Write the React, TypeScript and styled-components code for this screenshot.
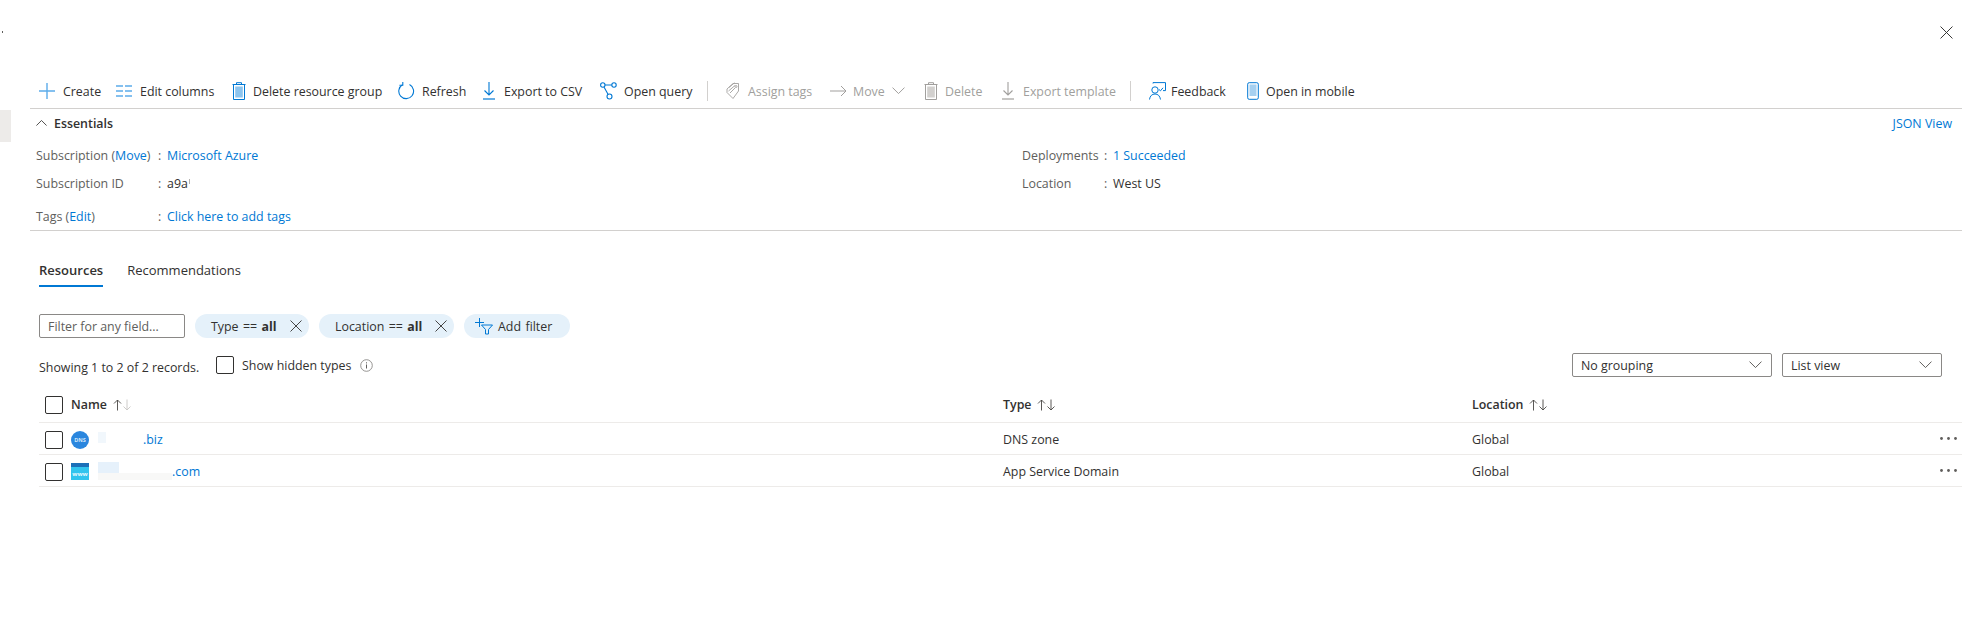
import React from 'react';
import styled, { createGlobalStyle } from 'styled-components';

const BLUE = '#0078d4';
const SOFT = '#5cacea';
const GREY = '#a19f9d';

const GlobalStyle = createGlobalStyle`
  html, body {
    margin: 0;
    padding: 0;
    background: #ffffff;
  }
  body {
    font-family: 'Open Sans', 'Liberation Sans', sans-serif;
    font-size: 12.4px;
    color: #323130;
  }
`;

const PlusIcon = () => (
  <svg width="16" height="16" viewBox="0 0 16 16">
    <path d="M8 0v16M0 8h16" stroke={SOFT} strokeWidth="1.4" fill="none" />
  </svg>
);
const ColumnsIcon = () => (
  <svg width="16" height="12" viewBox="0 0 16 12">
    <path d="M0 1h7M9 1h7M0 6h7M9 6h7M0 11h7M9 11h7" stroke={SOFT} strokeWidth="1.5" fill="none" />
  </svg>
);
const TrashIcon = ({ color = BLUE, fill = '#8cc4ee' }: { color?: string; fill?: string }) => (
  <svg width="14" height="18" viewBox="0 0 14 18">
    <path d="M4.5 2V.7h5V2M.5 2.5h13M1.5 2.500v15h11v-15" stroke={color} strokeWidth="1" fill="none" />
    <rect x="3.2" y="4.500" width="7.600" height="11" fill={fill} />
  </svg>
);
const RefreshIcon = () => (
  <svg width="17" height="18" viewBox="0 0 17 18">
    <path d="M11.5 2.600a7.400 7.400 0 1 1-7 .2" stroke={BLUE} strokeWidth="1.100" fill="none" />
    <path d="M4.800 0v3.200H1.400" stroke={BLUE} strokeWidth="1.100" fill="none" />
  </svg>
);
const DownloadIcon = ({ color = BLUE }: { color?: string }) => (
  <svg width="12" height="18" viewBox="0 0 12 18">
    <path d="M6 0v13M1.500 8.500 6 13l4.500-4.500" stroke={color} strokeWidth="1.100" fill="none" />
    <path d="M0 17h12" stroke={color} strokeWidth="1.200" fill="none" />
  </svg>
);
const QueryIcon = () => (
  <svg width="17" height="18" viewBox="0 0 17 18">
    <g stroke={BLUE} strokeWidth="1.100" fill="none">
      <circle cx="2.800" cy="3" r="2.200" />
      <circle cx="14" cy="3" r="2.200" />
      <circle cx="9.500" cy="14.500" r="2.500" />
      <path d="M5 3h6.800M4 5l4 7.300" />
    </g>
  </svg>
);
const TagsIcon = () => (
  <svg width="14" height="18" viewBox="0 0 14 18">
    <g stroke={GREY} strokeWidth="0.900" fill="none">
      <path d="M1 7 7 1.500h5.500V9L7 16.500 1 10.500z" />
      <path d="M3 5.500 8.500.8M2.500 9 9 3.500M4 11l5-5" />
      <circle cx="10" cy="4.500" r="1" />
    </g>
  </svg>
);
const ArrowIcon = () => (
  <svg width="17" height="12" viewBox="0 0 17 12">
    <path d="M0 6h16M11 1l5 5-5 5" stroke={GREY} strokeWidth="1" fill="none" />
  </svg>
);
const FeedbackIcon = () => (
  <svg width="17" height="18" viewBox="0 0 17 18">
    <g stroke={BLUE} strokeWidth="1" fill="none">
      <circle cx="6" cy="8" r="3.200" />
      <path d="M.5 17.500c.4-3.500 2.500-5.500 5.500-5.500s5 2 5.500 5.500" />
      <path d="M4 1.500V.6h12.500v8H14" />
      <path d="M10 7.500l1.500 1.300 2.500-3" />
    </g>
  </svg>
);
const MobileIcon = () => (
  <svg width="12" height="18" viewBox="0 0 12 18">
    <rect x="0.700" y="0.700" width="10.600" height="16.600" rx="1.500" stroke={BLUE} strokeWidth="1" fill="#ffffff" />
    <rect x="2.500" y="2.500" width="7" height="11.500" fill="#a6d0f0" />
  </svg>
);
const Chevron = ({ size = 13, color = '#605e5c' }: { size?: number; color?: string }) => (
  <svg width={size} height={size * 0.55} viewBox="0 0 13 7">
    <path d="M.5.500l6 6 6-6" stroke={color} strokeWidth="1" fill="none" />
  </svg>
);
const Cross = ({ size = 12, color = '#323130' }: { size?: number; color?: string }) => (
  <svg width={size} height={size} viewBox="0 0 12 12">
    <path d="M.5.500l11 11M11.500.500l-11 11" stroke={color} strokeWidth="0.900" fill="none" />
  </svg>
);
const SortArrows = ({ faded }: { faded?: boolean }) => (
  <svg width="19" height="12" viewBox="0 0 19 12">
    <path d="M4.500 11.500V1M1 4.500l3.500-3.500 3.500 3.500" stroke="#484644" strokeWidth="0.900" fill="none" />
    <path d="M14 .5V11M10.500 7.500 14 11l3.500-3.500" stroke={faded ? '#c8c6c4' : '#484644'} strokeWidth="0.900" fill="none" />
  </svg>
);
const AddFilterIcon = () => (
  <svg width="18" height="17" viewBox="0 0 18 17">
    <path d="M4.500 0v9M0 4.500h9" stroke={BLUE} strokeWidth="1" fill="none" />
    <path d="M6.500 7h11l-4 4.500V16h-3v-4.500z" stroke={BLUE} strokeWidth="1" fill="none" />
  </svg>
);
const InfoIcon = () => (
  <svg width="13" height="13" viewBox="0 0 13 13">
    <circle cx="6.500" cy="6.500" r="5.800" stroke="#8a8886" strokeWidth="0.900" fill="none" />
    <path d="M6.500 5.500v4M6.500 3.300v1.100" stroke="#605e5c" strokeWidth="1" fill="none" />
  </svg>
);
const DnsIcon = () => (
  <svg width="18" height="18" viewBox="0 0 18 18">
    <circle cx="9" cy="9" r="9" fill="#2a86de" />
    <text x="9" y="11" textAnchor="middle" fontSize="5.500" fontWeight="700" fill="#cfe6fa" fontFamily="Open Sans">DNS</text>
  </svg>
);
const WwwIcon = () => (
  <svg width="18" height="17" viewBox="0 0 18 17">
    <rect width="18" height="17" fill="#32c4ee" />
    <rect width="18" height="4" fill="#1b6fb8" />
    <text x="9" y="12.500" textAnchor="middle" fontSize="6" fontWeight="700" fill="#e8f8fe" fontFamily="Open Sans">www</text>
  </svg>
);
const DotsIcon = () => (
  <svg width="17" height="3" viewBox="0 0 17 3">
    <circle cx="1.500" cy="1.500" r="1.400" fill="#605e5c" />
    <circle cx="8.500" cy="1.500" r="1.400" fill="#605e5c" />
    <circle cx="15.500" cy="1.500" r="1.400" fill="#605e5c" />
  </svg>
);

const toolbarItems = [
  { label: 'Create', icon: <PlusIcon />, width: 77, slot: 24 },
  { label: 'Edit columns', icon: <ColumnsIcon />, width: 116, slot: 24 },
  { label: 'Delete resource group', icon: <TrashIcon />, width: 166, slot: 21 },
  { label: 'Refresh', icon: <RefreshIcon />, width: 85, slot: 24 },
  { label: 'Export to CSV', icon: <DownloadIcon />, width: 117, slot: 21 },
  { label: 'Open query', icon: <QueryIcon />, width: 107, slot: 24 },
  { separator: true },
  { label: 'Assign tags', icon: <TagsIcon />, width: 104, slot: 22, disabled: true },
  { label: 'Move', icon: <ArrowIcon />, width: 94, slot: 23, disabled: true, menu: true },
  { label: 'Delete', icon: <TrashIcon color={GREY} fill="#d2d0ce" />, width: 78, slot: 21, disabled: true },
  { label: 'Export template', icon: <DownloadIcon color={GREY} />, width: 128, slot: 21, disabled: true },
  { separator: true },
  { label: 'Feedback', icon: <FeedbackIcon />, width: 98, slot: 22 },
  { label: 'Open in mobile', icon: <MobileIcon />, width: 120, slot: 19 },
];

export default function App() {
  return (
    <Page>
      <GlobalStyle />
      <StrayDot />
      <SideStub />
      <TopBar>
        <Cross size={13} />
      </TopBar>

      <Toolbar>
        {toolbarItems.map((item, i) =>
          item.separator ? (
            <ToolSeparator key={i} />
          ) : (
            <ToolButton key={i} $width={item.width} $disabled={item.disabled}>
              <IconSlot $width={item.slot}>{item.icon}</IconSlot>
              {item.label}
              {item.menu && (
                <MenuChevron>
                  <Chevron color={GREY} />
                </MenuChevron>
              )}
            </ToolButton>
          ),
        )}
      </Toolbar>

      <Essentials>
        <EssentialsHead>
          <EssentialsTitle>
            <ChevronUp>
              <Chevron size={11} color="#323130" />
            </ChevronUp>
            Essentials
          </EssentialsTitle>
          <Link>JSON View</Link>
        </EssentialsHead>
        <EssentialsGrid>
          <InfoRow>
            <InfoLabel>
              Subscription (<Link>Move</Link>)
            </InfoLabel>
            <Colon>:</Colon>
            <Link>Microsoft Azure</Link>
          </InfoRow>
          <InfoRow>
            <InfoLabel $short>Deployments</InfoLabel>
            <Colon>:</Colon>
            <Link>1 Succeeded</Link>
          </InfoRow>
          <InfoRow>
            <InfoLabel>Subscription ID</InfoLabel>
            <Colon>:</Colon>
            <span>a9a</span>
            <CutMark />
          </InfoRow>
          <InfoRow>
            <InfoLabel $short>Location</InfoLabel>
            <Colon>:</Colon>
            <span>West US</span>
          </InfoRow>
          <InfoRow $tall>
            <InfoLabel>
              Tags (<Link>Edit</Link>)
            </InfoLabel>
            <Colon>:</Colon>
            <Link>Click here to add tags</Link>
          </InfoRow>
        </EssentialsGrid>
      </Essentials>

      <Tabs>
        <Tab $active>Resources</Tab>
        <Tab>Recommendations</Tab>
      </Tabs>

      <FilterRow>
        <FilterInput placeholder="Filter for any field..." readOnly />
        <Pill $width={114}>
          <span>
            Type == <b>all</b>
          </span>
          <Cross />
        </Pill>
        <Pill $width={135}>
          <span>
            Location == <b>all</b>
          </span>
          <Cross />
        </Pill>
        <Pill $width={106} $add>
          <AddFilterIcon />
          <span>Add filter</span>
        </Pill>
      </FilterRow>

      <SummaryRow>
        <RecordCount>Showing 1 to 2 of 2 records.</RecordCount>
        <Checkbox />
        <HiddenLabel>Show hidden types</HiddenLabel>
        <InfoIcon />
        <Selects>
          <Select $width={200}>
            No grouping
            <Chevron />
          </Select>
          <Select $width={160}>
            List view
            <Chevron />
          </Select>
        </Selects>
      </SummaryRow>

      <Table>
        <HeaderRow>
          <Checkbox $inset />
          <HeaderCell>
            Name
            <SortArrows faded />
          </HeaderCell>
          <HeaderCell>
            Type
            <SortArrows />
          </HeaderCell>
          <HeaderCell>
            Location
            <SortArrows />
          </HeaderCell>
        </HeaderRow>
        <BodyRow>
          <Checkbox $inset />
          <NameCell>
            <DnsIcon />
            <Link>
              <Redacted $width={45}>
                <FaintPatch />
              </Redacted>
              .biz
            </Link>
          </NameCell>
          <span>DNS zone</span>
          <span>Global</span>
          <MoreButton>
            <DotsIcon />
          </MoreButton>
        </BodyRow>
        <BodyRow>
          <Checkbox $inset />
          <NameCell>
            <WwwIcon />
            <Link>
              <Redacted $width={74}>
                <BluePatch />
                <GreyPatch />
              </Redacted>
              .com
            </Link>
          </NameCell>
          <span>App Service Domain</span>
          <span>Global</span>
          <MoreButton>
            <DotsIcon />
          </MoreButton>
        </BodyRow>
      </Table>
    </Page>
  );
}

const Page = styled.div`
  position: relative;
  box-sizing: border-box;
  width: 1976px;
  height: 644px;
  padding: 0 14px 0 30px;
  overflow: hidden;
  background: #ffffff;
`;
const StrayDot = styled.div`
  position: absolute;
  left: 2px;
  top: 31px;
  width: 1px;
  height: 2px;
  background: #605e5c;
`;
const SideStub = styled.div`
  position: absolute;
  left: 0;
  top: 110px;
  width: 11px;
  height: 32px;
  background: #edebe9;
`;
const TopBar = styled.div`
  display: flex;
  justify-content: flex-end;
  align-items: center;
  height: 64px;
  padding-right: 9px;
`;
const Toolbar = styled.div`
  display: flex;
  align-items: center;
  box-sizing: border-box;
  height: 45px;
  padding: 10px 0 0 9px;
  border-bottom: 1px solid #d2d0ce;
`;
const ToolButton = styled.div<{ $width?: number; $disabled?: boolean }>`
  display: flex;
  align-items: center;
  flex: none;
  width: ${({ $width }) => $width}px;
  white-space: nowrap;
  color: ${({ $disabled }) => ($disabled ? GREY : '#323130')};
`;
const IconSlot = styled.span<{ $width: number }>`
  display: flex;
  align-items: center;
  flex: none;
  width: ${({ $width }) => $width}px;
`;
const MenuChevron = styled.span`
  display: flex;
  margin-left: 7px;
`;
const ToolSeparator = styled.div`
  flex: none;
  width: 1px;
  height: 20px;
  margin-right: 18px;
  background: #d2d0ce;
`;
const Essentials = styled.section`
  height: 122px;
  box-sizing: border-box;
  padding-left: 6px;
  border-bottom: 1px solid #d2d0ce;
`;
const EssentialsHead = styled.div`
  display: flex;
  justify-content: space-between;
  align-items: center;
  height: 28px;
  padding-right: 10px;
  margin-bottom: 4px;
`;
const EssentialsTitle = styled.div`
  display: flex;
  align-items: center;
  font-weight: 600;
`;
const ChevronUp = styled.span`
  display: flex;
  justify-content: flex-end;
  width: 18px;
  transform: rotate(180deg);
`;
const EssentialsGrid = styled.div`
  display: grid;
  grid-template-columns: 986px 1fr;
  grid-auto-rows: 28px;
`;
const InfoRow = styled.div<{ $tall?: boolean }>`
  display: flex;
  align-items: center;
  margin-top: ${({ $tall }) => ($tall ? '10px' : '0')};
  white-space: nowrap;
`;
const InfoLabel = styled.span<{ $short?: boolean }>`
  flex: none;
  width: ${({ $short }) => ($short ? '82px' : '122px')};
  color: #605e5c;
`;
const Colon = styled.span`
  flex: none;
  width: 9px;
  color: #605e5c;
`;
const CutMark = styled.span`
  width: 1px;
  height: 5px;
  margin: 0 0 4px 1px;
  background: #b3b0ad;
`;
const Link = styled.span`
  color: ${BLUE};
`;
const Tabs = styled.div`
  display: flex;
  gap: 24px;
  padding: 24px 0 0 9px;
`;
const Tab = styled.div<{ $active?: boolean }>`
  box-sizing: border-box;
  height: 32px;
  line-height: 30px;
  font-size: 13px;
  font-weight: ${({ $active }) => ($active ? 600 : 400)};
  border-bottom: 2px solid ${({ $active }) => ($active ? BLUE : 'transparent')};
`;
const FilterRow = styled.div`
  display: flex;
  align-items: center;
  gap: 10px;
  height: 24px;
  margin-top: 27px;
  padding-left: 9px;
`;
const FilterInput = styled.input`
  box-sizing: border-box;
  width: 146px;
  height: 24px;
  padding: 0 8px;
  border: 1px solid #8a8886;
  border-radius: 2px;
  font: inherit;
  outline: none;
  &::placeholder {
    color: #605e5c;
    opacity: 1;
  }
`;
const Pill = styled.div<{ $width: number; $add?: boolean }>`
  display: flex;
  align-items: center;
  justify-content: ${({ $add }) => ($add ? 'flex-start' : 'space-between')};
  gap: 5px;
  box-sizing: border-box;
  width: ${({ $width }) => $width}px;
  height: 24px;
  padding: 0 ${({ $add }) => ($add ? '0 0 11px' : '7px 0 16px')};
  border-radius: 12px;
  background: #e5f1fa;
  white-space: nowrap;
  word-spacing: 1.2px;
  b {
    font-weight: 700;
  }
`;
const SummaryRow = styled.div`
  display: flex;
  align-items: center;
  height: 24px;
  margin-top: 15px;
  padding-left: 9px;
`;
const RecordCount = styled.span`
  width: 177px;
  padding-top: 4px;
`;
const Checkbox = styled.div<{ $inset?: boolean }>`
  flex: none;
  box-sizing: border-box;
  width: 18px;
  height: 18px;
  margin-left: ${({ $inset }) => ($inset ? '6px' : '0')};
  border: 1px solid #323130;
  border-radius: 2px;
  background: #ffffff;
`;
const HiddenLabel = styled.span`
  box-sizing: border-box;
  width: 126px;
  padding-left: 8px;
  white-space: nowrap;
`;
const Selects = styled.div`
  display: flex;
  gap: 10px;
  margin-left: auto;
  padding-right: 20px;
`;
const Select = styled.div<{ $width: number }>`
  display: flex;
  align-items: center;
  justify-content: space-between;
  box-sizing: border-box;
  width: ${({ $width }) => $width}px;
  height: 24px;
  padding: 0 9px 0 8px;
  border: 1px solid #8a8886;
  border-radius: 2px;
`;
const Table = styled.div`
  padding-left: 9px;
`;
const HeaderRow = styled.div`
  display: grid;
  grid-template-columns: 32px 932px 469px 1fr;
  align-items: center;
  box-sizing: border-box;
  height: 46px;
  padding-top: 10px;
  border-bottom: 1px solid #edebe9;
`;
const BodyRow = styled(HeaderRow)`
  position: relative;
  height: 32px;
  padding-top: 2px;
`;
const HeaderCell = styled.div`
  display: flex;
  align-items: center;
  gap: 6px;
  font-weight: 600;
`;
const NameCell = styled.div`
  display: flex;
  align-items: center;
  gap: 9px;
`;
const Redacted = styled.span<{ $width: number }>`
  position: relative;
  display: inline-block;
  width: ${({ $width }) => $width}px;
  height: 12px;
`;
const FaintPatch = styled.span`
  position: absolute;
  left: 0;
  top: 0;
  width: 8px;
  height: 11px;
  background: #f1f7fc;
`;
const BluePatch = styled.span`
  position: absolute;
  left: 0;
  top: -2px;
  width: 21px;
  height: 11px;
  background: #e6f1fb;
`;
const GreyPatch = styled.span`
  position: absolute;
  left: 0;
  top: 9px;
  width: 74px;
  height: 7px;
  background: #f8f8f7;
`;
const MoreButton = styled.span`
  position: absolute;
  right: 5px;
  top: 14px;
  display: flex;
`;
